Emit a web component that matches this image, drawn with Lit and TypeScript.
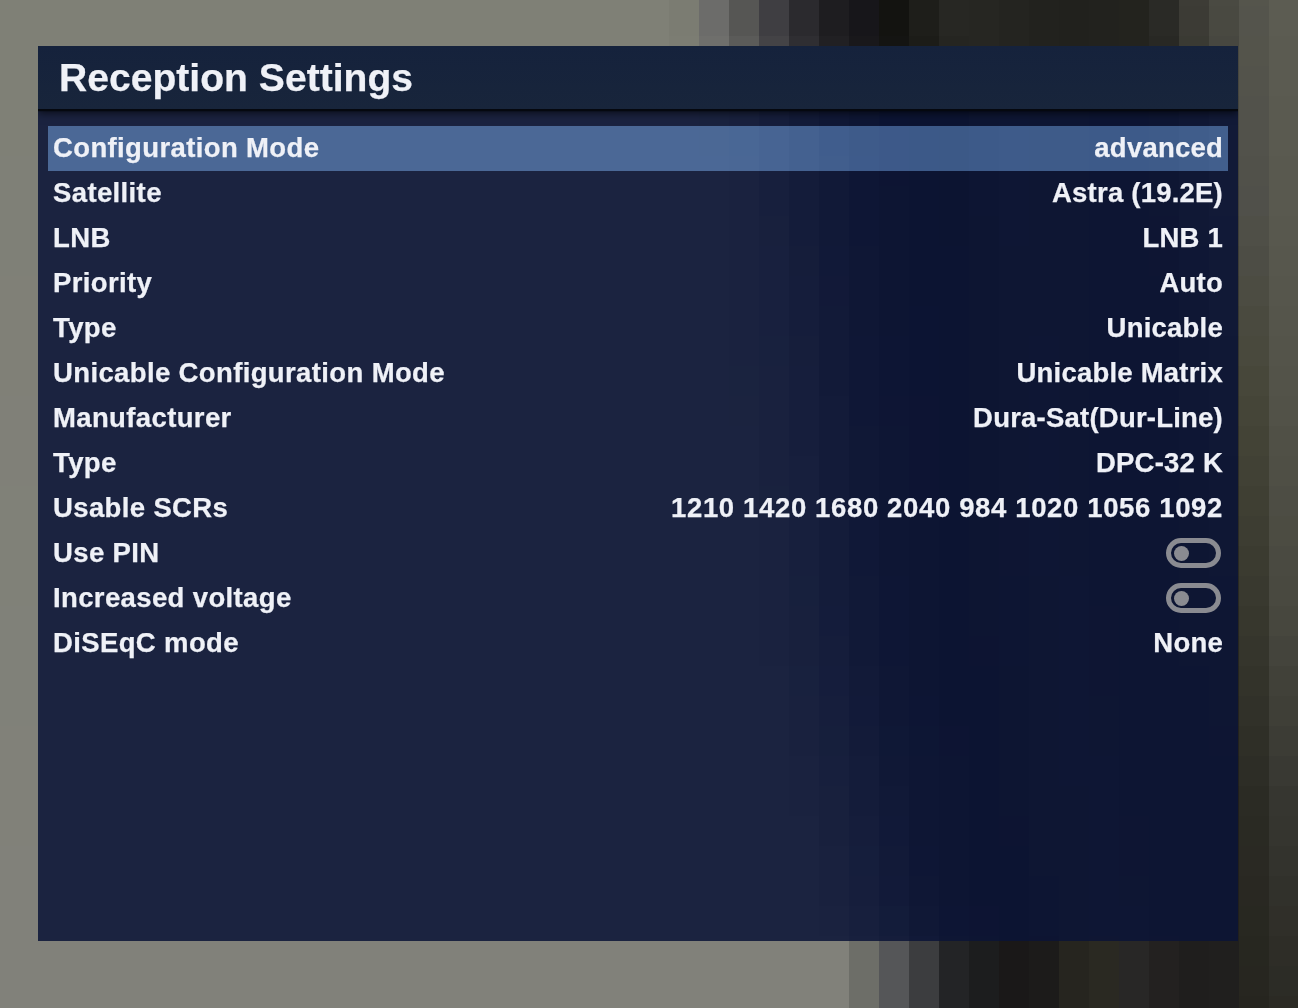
import { LitElement, html, css, svg } from "lit";
import { customElement } from "lit/decorators.js";

type RGB = [number, number, number];
const hex = (h: string): RGB => [parseInt(h.slice(0, 2), 16), parseInt(h.slice(2, 4), 16), parseInt(h.slice(4, 6), 16)];
const mix = (a: RGB, b: RGB, t: number): RGB => [a[0] + (b[0] - a[0]) * t, a[1] + (b[1] - a[1]) * t, a[2] + (b[2] - a[2]) * t];
const css3 = (c: RGB) => `rgb(${Math.round(c[0])},${Math.round(c[1])},${Math.round(c[2])})`;

const TOP = ["7b7c72", "6c6c6a", "565654", "3f3e42", "2b2a2e", "1e1d20", "17161a", "131310", "1e1e1a", "272723", "262622", "242420", "22221e", "21211d", "22221e", "23231e", "2a2a26"].map(hex);
const BOT = ["6d6e68", "555658", "3c3d3f", "232426", "1c1d1e", "1a1818", "1c1b1a", "26251f", "2a2922", "282726", "232120", "1f1e1d", "1f1e1d", "201f1e", "26251f", "2b2a24", "2b2a24"].map(hex);
const RIGHT: Record<number, RGB[]> = {
  1179: ["3d3c36", "33332c", "2a2a24", "24241f", "1f1e1d", "1f1e1d"].map(hex),
  1209: ["4a4a42", "40403a", "33332c", "282822", "201f1e", "201f1e"].map(hex),
  1239: ["55554c", "50504a", "464638", "38382e", "2b2b24", "26251f"].map(hex),
  1269: ["5c5c52", "59594f", "525248", "48483f", "363630", "2b2a24"].map(hex),
};

const SHIFT: [number, number][] = [[40, 0], [120, 50], [650, 110], [900, 160], [950, 180], [1040, 180]];
const shiftAt = (y: number) => {
  if (y <= SHIFT[0][0]) return 0;
  for (let i = 1; i < SHIFT.length; i++) {
    if (y <= SHIFT[i][0]) {
      const [y0, s0] = SHIFT[i - 1];
      const [y1, s1] = SHIFT[i];
      return s0 + ((s1 - s0) * (y - y0)) / (y1 - y0);
    }
  }
  return 180;
};

const profile = (arr: RGB[], beige: RGB, u: number): RGB => {
  const i = (u - 669) / 30;
  if (i <= -1) return beige;
  if (i < 0) return mix(beige, arr[0], i + 1);
  const k = Math.floor(i);
  if (k >= arr.length - 1) return arr[arr.length - 1];
  return mix(arr[k], arr[k + 1], i - k);
};

const cellColor = (x: number, y: number): RGB => {
  const t = Math.min(1, Math.max(0, (y - 40) / 910));
  if (RIGHT[x]) {
    const p = Math.min(1, Math.max(0, y / 1008)) * 5;
    const k = Math.min(4, Math.floor(p));
    return mix(RIGHT[x][k], RIGHT[x][k + 1], p - k);
  }
  const u = x - shiftAt(y);
  return mix(profile(TOP, hex("7f8076"), u), profile(BOT, hex("81817a"), u), t);
};

const cells: { x: number; y: number; c: string }[] = [];
for (let x = -21; x < 1298; x += 30) {
  for (let y = -24; y < 1008; y += 30) {
    cells.push({ x, y, c: css3(cellColor(x, y + 15)) });
  }
}

type Row = { label: string; value?: string; toggle?: boolean; active?: boolean; digits?: boolean };
const ROWS: Row[] = [
  { label: "Configuration Mode", value: "advanced", active: true },
  { label: "Satellite", value: "Astra (19.2E)" },
  { label: "LNB", value: "LNB 1" },
  { label: "Priority", value: "Auto" },
  { label: "Type", value: "Unicable" },
  { label: "Unicable Configuration Mode", value: "Unicable Matrix" },
  { label: "Manufacturer", value: "Dura-Sat(Dur-Line)" },
  { label: "Type", value: "DPC-32 K" },
  { label: "Usable SCRs", value: "1210 1420 1680 2040 984 1020 1056 1092", digits: true },
  { label: "Use PIN", toggle: true },
  { label: "Increased voltage", toggle: true },
  { label: "DiSEqC mode", value: "None" },
];

@customElement("app-root")
export class AppRoot extends LitElement {
  static styles = css`
    :host {
      display: block;
      position: relative;
      width: 1298px;
      height: 1008px;
      overflow: hidden;
      background: #81817a;
      font-family: "Liberation Sans", Arial, sans-serif;
      font-weight: 700;
      color: #eff1f7;
      -webkit-text-stroke: 0.25px #eff1f7;
    }
    .bg {
      position: absolute;
      inset: 0;
      width: 1298px;
      height: 1008px;
      display: block;
    }
    .stage {
      position: relative;
      box-sizing: border-box;
      height: 1008px;
      padding: 46px 60px 67px 38px;
      display: flex;
    }
    .panel {
      flex: 1;
      display: flex;
      flex-direction: column;
      overflow: hidden;
      background: rgba(11, 20, 55, 0.86);
    }
    .header {
      position: relative;
      height: 63px;
      flex: none;
      box-sizing: border-box;
      display: flex;
      align-items: center;
      padding: 1px 0 0 21px;
      background: linear-gradient(180deg, #15223c 0%, #18253b 100%);
      box-shadow: 0 2px 1px #05080f, 0 4px 8px rgba(0, 0, 0, 0.65);
      font-size: 39px;
      letter-spacing: 0.05px;
    }
    .list {
      display: flex;
      flex-direction: column;
      padding: 17px 10px 0;
    }
    .row {
      position: relative;
      box-sizing: border-box;
      height: 45px;
      padding: 0 5px 1px;
      display: flex;
      align-items: center;
      justify-content: space-between;
      font-size: 27.5px;
    }
    .row.active::before {
      content: "";
      position: absolute;
      inset: 0;
      background: rgb(48, 69, 86);
      mix-blend-mode: plus-lighter;
    }
    .label,
    .value {
      position: relative;
      white-space: nowrap;
    }
    .label {
      letter-spacing: 0.37px;
    }
    .value {
      letter-spacing: 0.22px;
    }
    .value.digits {
      letter-spacing: 0.64px;
    }
    .toggle {
      position: relative;
      box-sizing: border-box;
      width: 55px;
      height: 30px;
      margin-right: 2px;
      border: 5px solid #8a8b91;
      border-radius: 15px;
      display: flex;
      align-items: center;
      padding-left: 3px;
    }
    .knob {
      width: 15px;
      height: 15px;
      border-radius: 50%;
      background: #8a8b91;
    }
  `;

  render() {
    return html`
      <svg class="bg" viewBox="0 0 1298 1008" shape-rendering="crispEdges" aria-hidden="true">
        ${cells.map((c) => svg`<rect x=${c.x} y=${c.y} width="30" height="30" fill=${c.c}></rect>`)}
      </svg>
      <div class="stage">
        <div class="panel">
          <div class="header">Reception Settings</div>
          <div class="list">
            ${ROWS.map(
              (r) => html`
                <div class="row ${r.active ? "active" : ""}">
                  <span class="label">${r.label}</span>
                  ${r.toggle
                    ? html`<div class="toggle"><div class="knob"></div></div>`
                    : html`<span class="value ${r.digits ? "digits" : ""}">${r.value}</span>`}
                </div>
              `
            )}
          </div>
        </div>
      </div>
    `;
  }
}
